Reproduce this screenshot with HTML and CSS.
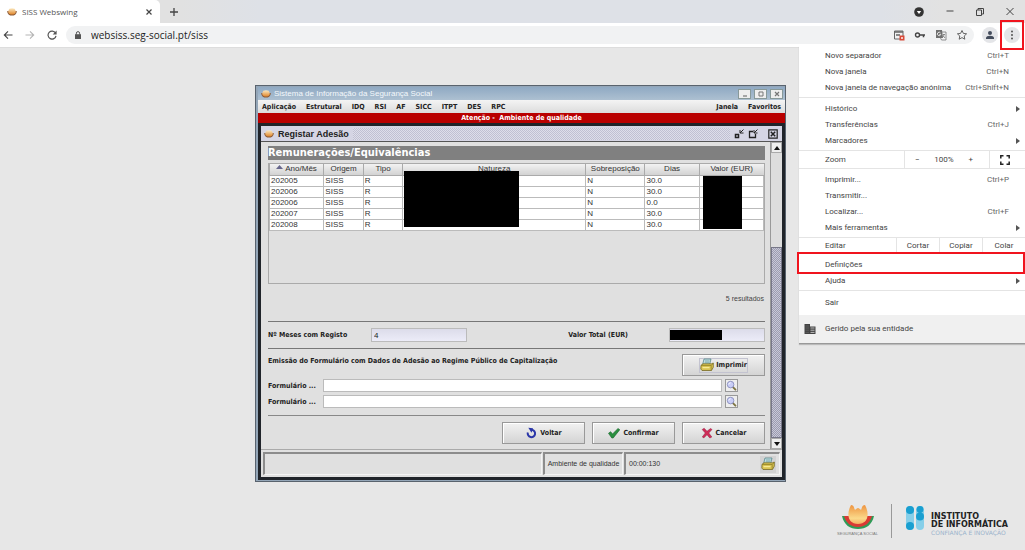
FILE: index.html
```html
<!DOCTYPE html>
<html lang="pt">
<head>
<meta charset="utf-8">
<title>SISS Webswing</title>
<link rel="stylesheet" href="styles.css">
</head>
<body>
<svg class="sprite" aria-hidden="true">
  <defs>
    <linearGradient id="gold" x1="0" y1="0" x2="0" y2="1"><stop offset="0" stop-color="#fbe9c0"/><stop offset="1" stop-color="#e0852a"/></linearGradient>
    <linearGradient id="flower" x1="0" y1="0" x2="0" y2="1"><stop offset="0" stop-color="#ee9440"/><stop offset=".7" stop-color="#fbd98a"/><stop offset="1" stop-color="#f3b062"/></linearGradient>
  </defs>
  <symbol id="i-bowl" viewBox="0 0 10 10">
    <path d="M0 4.200 2 4l1 2h4l1-2 2 .2C9.300 7.500 7.500 8.600 5 8.600S.7 7.500 0 4.200Z" fill="#8a5a38"/>
    <path d="M2.400 1.800 5 1.300l2.600.5C9.800 5 8.800 7.600 5 7.600S.2 5 2.400 1.800Z" fill="url(#gold)"/>
  </symbol>
  <symbol id="i-printer" viewBox="0 0 14 14">
    <path d="M4 1h7l-1.500 6h-7Z" fill="#c3e0e4" stroke="#477b80" stroke-width=".7"/>
    <path d="M5 3h4.500M4.700 4.800h4.500" stroke="#5f9195" stroke-width=".7"/>
    <path d="M1 7.300 3 5.800h8.500L13.300 5v4.200L11.500 12.500H2L.8 11Z" fill="#d8c352" stroke="#685b17" stroke-width=".7"/>
    <path d="M1.200 7.500h10l2-2M11.200 7.500v4.800" fill="none" stroke="#8b7b22" stroke-width=".7"/>
    <path d="M2.500 9.700h7" stroke="#fff3a6" stroke-width="1"/>
  </symbol>
  <symbol id="i-search" viewBox="0 0 12 12">
    <path d="m7.300 7.600 3 3" stroke="#7d7442" stroke-width="2" stroke-linecap="round"/>
    <circle cx="5" cy="5" r="3.600" fill="#c9cdf6" stroke="#8388b8" stroke-width=".9"/>
    <path d="M3 4.800A2 2 0 0 1 5 3" stroke="#fff" fill="none"/>
  </symbol>
  <symbol id="i-undo" viewBox="0 0 12 12"><path d="M2.800 5.500A3.700 3.700 0 1 0 7 2.800" fill="none" stroke="#2a36a8" stroke-width="2"/><path d="M3.300.8 8 1.200 6.500 5.800Z" fill="#2a36a8"/></symbol>
  <symbol id="i-check" viewBox="0 0 12 12"><path d="M.5 6.300 2.600 4.700l2 2.200L10 1.500l1.800 1.200L5.200 11H3.800Z" fill="#2a9040" stroke="#166228" stroke-width=".6"/></symbol>
  <symbol id="i-cross" viewBox="0 0 12 12"><path d="M1.200 2.500 3.200 1.300 6 4.300 9.500 1.500l1.500 1L7.800 6l3 4-2 1L6 7.700 2.800 10.900 1.300 9.900 4.300 6Z" fill="#cf2c58" stroke="#93183a" stroke-width=".5"/></symbol>
</svg>

<div class="browser">
  <header class="tabs">
    <div class="tab">
      <svg class="ic10"><use href="#i-bowl"/></svg>
      <span class="tab-name">SISS Webswing</span>
      <button class="plain" aria-label="Fechar separador"><svg class="ic8" viewBox="0 0 8 8"><path d="m1.500 1.500 5 5m0-5-5 5" stroke="#444" stroke-width="1.200"/></svg></button>
    </div>
    <button class="plain new-tab" aria-label="Novo separador"><svg class="ic10" viewBox="0 0 10 10"><path d="M5 1v8M1 5h8" stroke="#444" stroke-width="1.300"/></svg></button>
    <div class="controls">
      <button class="plain" aria-label="Pesquisar separadores"><svg class="ic12" viewBox="0 0 12 12"><circle cx="6" cy="6" r="4.800" fill="#333"/><path d="M3.800 5h4.400L6 8Z" fill="#fff"/></svg></button>
      <button class="plain" aria-label="Minimizar"><svg class="ic10" viewBox="0 0 10 10"><path d="M1.500 4h7" stroke="#444"/></svg></button>
      <button class="plain" aria-label="Restaurar"><svg class="ic10" viewBox="0 0 10 10"><path d="M1.500 3h5v5.500h-5ZM3 3V1.500h5.500v5.500h-2" fill="none" stroke="#444"/></svg></button>
      <button class="plain" aria-label="Fechar"><svg class="ic10" viewBox="0 0 10 10"><path d="m1.500 1 7 7m0-7-7 7" stroke="#444"/></svg></button>
    </div>
  </header>

  <nav class="toolbar">
    <button class="plain" aria-label="Retroceder"><svg class="ic10" viewBox="0 0 10 10"><path d="M9.500 5h-8M5 1.300 1.300 5 5 8.700" fill="none" stroke="#444" stroke-width="1.100"/></svg></button>
    <button class="plain" aria-label="Avançar"><svg class="ic10" viewBox="0 0 10 10"><path d="M.5 5h8M5 1.300 8.700 5 5 8.700" fill="none" stroke="#b5b5b5" stroke-width="1.100"/></svg></button>
    <button class="plain" aria-label="Atualizar"><svg class="ic10" viewBox="0 0 10 10"><path d="M8.500 3A4 4 0 1 0 9 5.800" fill="none" stroke="#555" stroke-width="1.200"/><path d="M9.600.5v4H5.700Z" fill="#555"/></svg></button>
    <div class="address">
      <svg class="ic8" viewBox="0 0 8 8"><path d="M1 3.200h6V8H1Z" fill="#555"/><path d="M2.400 3.500V2.200a1.600 1.600 0 0 1 3.200 0v1.300" fill="none" stroke="#555"/></svg>
      <input class="url" type="text" aria-label="Endereço" value="websiss.seg-social.pt/siss">
      <button class="plain" aria-label="Conteúdo bloqueado"><svg class="ic12" viewBox="0 0 12 12"><path d="M1.500 2h8.500v8h-8.500Z" fill="none" stroke="#666"/><path d="M1.500 3h8.500M3 6h4" stroke="#666" stroke-width="1.400"/><rect x="6.500" y="6.500" width="5" height="5" fill="#d84a38"/><path d="m8 8 2 2m0-2-2 2" stroke="#fff" stroke-width=".7"/></svg></button>
      <button class="plain" aria-label="Palavras-passe"><svg class="ic12" viewBox="0 0 12 12"><circle cx="3.500" cy="6" r="2" fill="none" stroke="#444" stroke-width="1.400"/><path d="M5.500 6H11M9.500 6v2.200" stroke="#444" stroke-width="1.500"/></svg></button>
      <button class="plain" aria-label="Traduzir"><svg class="ic12" viewBox="0 0 12 12"><path d="M1 1h6l1 8H1Z" fill="#707070"/><path d="M7 3h4v8H6.500L5.500 9M7.800 5.500H10M9 5c0 2-1 3-2 3.500M8 6.500l2 2.500" fill="none" stroke="#777" stroke-width=".8"/><path d="M5.500 4A1.700 1.700 0 1 0 5.700 5.500H4.300" fill="none" stroke="#fff" stroke-width=".8"/></svg></button>
      <button class="plain" aria-label="Adicionar aos marcadores"><svg class="ic12" viewBox="0 0 12 12"><path d="m6 1.500 1.400 2.900 3.200.4-2.400 2.200.6 3.200L6 8.600l-2.800 1.600.6-3.200L1.400 4.800l3.200-.4Z" fill="none" stroke="#555" stroke-width=".9"/></svg></button>
    </div>
    <button class="plain round" aria-label="Perfil"><svg class="ic10" viewBox="0 0 10 10"><circle cx="5" cy="3" r="2" fill="#444c5c"/><path d="M1 9V8c0-1.600 2-2.300 4-2.300S9 6.400 9 8v1Z" fill="#444c5c"/></svg></button>
    <button class="plain round more" aria-label="Mais opções" aria-expanded="true"><svg class="ic10" viewBox="0 0 10 10"><g fill="#444"><circle cx="5" cy="1.500" r=".9"/><circle cx="5" cy="5" r=".9"/><circle cx="5" cy="8.500" r=".9"/></g></svg></button>
  </nav>

  <aside class="menu">
    <div class="group first">
      <button class="item">Novo separador<kbd>Ctrl+T</kbd></button>
      <button class="item">Nova janela<kbd>Ctrl+N</kbd></button>
      <button class="item">Nova janela de navegação anónima<kbd>Ctrl+Shift+N</kbd></button>
    </div>
    <div class="group">
      <button class="item sub">Histórico</button>
      <button class="item">Transferências<kbd>Ctrl+J</kbd></button>
      <button class="item sub">Marcadores</button>
    </div>
    <div class="strip zoom">
      <span class="strip-name">Zoom</span>
      <div class="level"><button class="plain" aria-label="Diminuir">−</button><span>100%</span><button class="plain" aria-label="Aumentar">+</button></div>
      <button class="plain full" aria-label="Ecrã inteiro"><svg class="ic10" viewBox="0 0 10 10"><path d="M.8 3.500V.8h2.700M6.500.8h2.700v2.700M9.200 6.500v2.700H6.500M3.500 9.200H.8V6.500" fill="none" stroke="#222" stroke-width="1.500"/></svg></button>
    </div>
    <div class="group">
      <button class="item">Imprimir...<kbd>Ctrl+P</kbd></button>
      <button class="item">Transmitir...</button>
      <button class="item">Localizar...<kbd>Ctrl+F</kbd></button>
      <button class="item sub">Mais ferramentas</button>
    </div>
    <div class="strip edit">
      <span class="strip-name">Editar</span>
      <button class="plain">Cortar</button><button class="plain">Copiar</button><button class="plain">Colar</button>
    </div>
    <div class="group settings">
      <button class="item marked">Definições</button>
      <button class="item sub">Ajuda</button>
    </div>
    <div class="group last">
      <button class="item">Sair</button>
    </div>
    <div class="managed">
      <svg class="ic12" viewBox="0 0 12 12"><path d="M.5 1h5.500v2.500h5.500V11H.5Z" fill="#444"/><path d="M6.500 5h4M6.500 7.200h4M6.500 9.400h4" stroke="#ddd" stroke-width=".8"/><path d="M1.500 3h3.500M1.500 5h3.500M1.500 7.200h3.500M1.500 9.400h3.500" stroke="#777" stroke-width=".5"/></svg>
      <span>Gerido pela sua entidade</span>
    </div>
  </aside>

  <main class="page">
    <section class="win">
      <div class="win-title">
        <svg class="ic10"><use href="#i-bowl"/></svg><h1>Sistema de Informação da Segurança Social</h1>
        <button class="wbtn" aria-label="Minimizar"><svg class="ic8" viewBox="0 0 8 8"><path d="M2 6h4" stroke="#777" stroke-width="1.200"/></svg></button>
        <button class="wbtn" aria-label="Maximizar"><svg class="ic8" viewBox="0 0 8 8"><path d="M2 2h4v4H2Z" fill="none" stroke="#777"/></svg></button>
        <button class="wbtn" aria-label="Fechar"><svg class="ic8" viewBox="0 0 8 8"><path d="m2 2 4 4m0-4-4 4" stroke="#777" stroke-width="1.200"/></svg></button>
      </div>
      <nav class="win-menu">
        <a href="#">Aplicação</a><a href="#">Estrutural</a><a href="#">IDQ</a><a href="#">RSI</a><a href="#">AF</a><a href="#">SICC</a><a href="#">ITPT</a><a href="#">DES</a><a href="#">RPC</a>
        <a class="push" href="#">Janela</a><a href="#">Favoritos</a>
      </nav>
      <p class="alert">Atenção -&nbsp; Ambiente de qualidade</p>
      <div class="inner">
        <div class="inner-title">
          <svg class="ic10"><use href="#i-bowl"/></svg><h2>Registar Adesão</h2><span class="grip"></span>
          <button class="plain" aria-label="Minimizar"><svg class="ic10" viewBox="0 0 10 10"><path d="M1.500 5.500h3v3h-3Z" fill="none" stroke="#222" stroke-width="1.500"/><path d="M9.500.5 6 4M6 1v3h3.500" fill="none" stroke="#222"/></svg></button>
          <button class="plain" aria-label="Maximizar"><svg class="ic10" viewBox="0 0 10 10"><path d="M5 2.500H1.500v6h6V5" fill="none" stroke="#222" stroke-width="1.300"/><path d="M9.500.5 6 4M6 1v3h3.500" fill="none" stroke="#222"/></svg></button>
          <button class="plain close" aria-label="Fechar"><svg class="ic10" viewBox="0 0 10 10"><path d="M.8.8h8.400v8.400H.8Z" fill="none" stroke="#222" stroke-width="1.200"/><path d="m2.800 2.800 4.400 4.400m0-4.400L2.800 7.200" stroke="#222" stroke-width="1.500"/></svg></button>
        </div>
        <div class="body">
          <div class="form">
            <h3 class="band">Remunerações/Equivalências</h3>
            <div class="grid">
              <table>
                <colgroup><col class="c-ano"><col class="c-ori"><col class="c-tipo"><col><col class="c-sob"><col class="c-dias"><col class="c-val"></colgroup>
                <thead><tr><th><svg class="sort" viewBox="0 0 7 4"><path d="M0 4 3.500 0 7 4Z" fill="#66668c"/></svg> Ano/Mês</th><th>Origem</th><th>Tipo</th><th>Natureza</th><th>Sobreposição</th><th>Dias</th><th>Valor (EUR)</th></tr></thead>
                <tbody>
                  <tr><td>202005</td><td>SISS</td><td>R</td><td></td><td>N</td><td>30.0</td><td></td></tr>
                  <tr><td>202006</td><td>SISS</td><td>R</td><td></td><td>N</td><td>30.0</td><td></td></tr>
                  <tr><td>202006</td><td>SISS</td><td>R</td><td></td><td>N</td><td>0.0</td><td></td></tr>
                  <tr><td>202007</td><td>SISS</td><td>R</td><td></td><td>N</td><td>30.0</td><td></td></tr>
                  <tr><td>202008</td><td>SISS</td><td>R</td><td></td><td>N</td><td>30.0</td><td></td></tr>
                </tbody>
              </table>
              <span class="mask mask-nat"></span><span class="mask mask-val"></span>
            </div>
            <p class="count">5 resultados</p>
            <div class="totals">
              <label for="meses">Nº Meses com Registo</label><input id="meses" class="ro" type="text" value="4" readonly>
              <label class="push" for="total">Valor Total (EUR)</label><span class="covered"><input id="total" class="ro" type="text" readonly><span class="mask mask-total"></span></span>
            </div>
            <div class="issue">
              <p>Emissão do Formulário com Dados de Adesão ao Regime Público de Capitalização</p>
              <button class="btn"><span class="focus"><svg class="ic14"><use href="#i-printer"/></svg>Imprimir</span></button>
            </div>
            <div class="pick"><label for="f1">Formulário ...</label><input id="f1" type="text"><button aria-label="Procurar"><svg class="ic12"><use href="#i-search"/></svg></button></div>
            <div class="pick"><label for="f2">Formulário ...</label><input id="f2" type="text"><button aria-label="Procurar"><svg class="ic12"><use href="#i-search"/></svg></button></div>
            <div class="actions">
              <button class="btn"><svg class="ic12"><use href="#i-undo"/></svg>Voltar</button>
              <button class="btn"><svg class="ic12"><use href="#i-check"/></svg>Confirmar</button>
              <button class="btn"><svg class="ic12"><use href="#i-cross"/></svg>Cancelar</button>
            </div>
          </div>
          <div class="scroll">
            <button aria-label="Subir"><svg class="tri" viewBox="0 0 6 4"><path d="M0 4 3 0l3 4Z" fill="#111"/></svg></button>
            <div class="track"></div><div class="thumb"></div>
            <button aria-label="Descer"><svg class="tri" viewBox="0 0 6 4"><path d="M0 0h6L3 4Z" fill="#111"/></svg></button>
          </div>
        </div>
        <footer class="status">
          <div class="cell wide"></div><div class="cell env">Ambiente de qualidade</div>
          <div class="cell time"><span>00:00:130</span><button class="plain print" aria-label="Imprimir"><svg class="ic14"><use href="#i-printer"/></svg></button></div>
        </footer>
      </div>
    </section>
    <footer class="logos">
      <div class="ss">
        <svg class="ss-mark" viewBox="0 0 34 26">
          <path d="M1 12h5c1 6 5 9 11 9s10-3 11-9h5c-2 9-8 13-16 13S3 21 1 12Z" fill="#2f9b57"/>
          <path d="M3 12h5c1 5 4 7 9 7s8-2 9-7h5c-2 7-7 11-14 11S5 19 3 12Z" fill="#d93a34"/>
          <path d="M10 1c3 0 3 3 4 5 1-1 2-2 3-2s2 1 3 2c1-2 1-5 4-5 5 9 3 19-7 19S5 10 10 1Z" fill="url(#flower)"/>
        </svg>
        <span class="ss-name">SEGURANÇA SOCIAL</span>
      </div>
      <div class="ii">
        <svg class="ii-mark" viewBox="0 0 20 26">
          <g fill="#86cfe9"><rect x="1" y="1" width="8" height="24" rx="4"/><rect x="11" y="1" width="8" height="24" rx="4"/></g>
          <g fill="#1a9fd0"><circle cx="5" cy="5" r="4"/><circle cx="15" cy="4.500" r="3.400"/><circle cx="15" cy="11.500" r="4"/><circle cx="5" cy="21" r="4"/></g>
        </svg>
        <div class="ii-name"><b>INSTITUTO</b><b>DE INFORMÁTICA</b><small>CONFIANÇA E INOVAÇÃO</small></div>
      </div>
    </footer>
  </main>
</div>
</body>
</html>
```

FILE: styles.css
```css
* { box-sizing: border-box; }
body { margin: 0; background: #e7e7e7; color: #222; font: 8px/10px "Open Sans", "Noto Sans", sans-serif; }
h1, h2, h3, p { margin: 0; font-size: inherit; }
button, input { font: inherit; color: inherit; margin: 0; padding: 0; border-radius: 0; }
svg { display: block; flex: none; }
.sprite { position: absolute; width: 0; height: 0; }
.ic8 { width: 8px; height: 8px; }
.ic10 { width: 10px; height: 10px; }
.ic12 { width: 12px; height: 12px; }
.ic14 { width: 14px; height: 14px; }
.plain { display: flex; align-items: center; justify-content: center; border: 0; background: none; }
.browser { position: relative; display: flex; flex-direction: column; min-height: 100vh; }

/* tab strip */
.tabs { display: flex; align-items: center; height: 23px; background: linear-gradient(90deg, #e1e1e1 0 180px, #dee1e7 260px 86%, #e2e2e2 92%); }
.tab { display: flex; align-items: center; gap: 5px; width: 160px; height: 23px; padding: 0 7px; background: #fff; border-radius: 0 5px 0 0; color: #555; }
.tab-name { flex: 1; }
.new-tab { margin-left: 9px; }
.controls { display: flex; align-items: center; gap: 20px; margin: 0 10px 0 auto; }

/* toolbar */
.toolbar { display: flex; align-items: center; height: 25px; padding: 0 5px 0 3px; background: #fff; border-bottom: 1px solid #ddd; gap: 12px; }
.address { display: flex; flex: 1; align-items: center; gap: 9px; height: 18px; padding: 0 6px; border-radius: 9px; background: #f1f2f3; margin: 0 -4px 0 -3px; }
.address .ic8 { margin: 0 0 0 2px; }
.url { flex: 1; border: 0; background: none; font-size: 10px; color: #222; outline: 0; }
.round { width: 16px; height: 16px; border-radius: 50%; background: #e4e5e8; }
.more { position: relative; z-index: 3; margin-left: -6px; }
.more::after { content: ""; position: absolute; inset: -7px -4px; border: 2px solid #f0141e; }

/* drop-down menu */
.menu { position: absolute; z-index: 2; top: 46px; right: 0; width: 226px; background: #fff; color: #444; border-bottom: 1px solid #999; box-shadow: 0 1px 1px #bbb; font-family: Roboto, "Open Sans", sans-serif; }
.group { padding: 3px 0 1px; border-bottom: 1px solid #e4e4e4; }
.first { padding-top: 2px; }
.last { border: 0; padding: 4px 0; }
.item { position: relative; display: flex; align-items: center; justify-content: space-between; width: 100%; height: 16px; padding: 0 16px 0 26px; border: 0; background: none; white-space: nowrap; }
.item kbd { font: inherit; color: #666; }
.sub::after { content: ""; position: absolute; right: 5px; top: 5px; border: 3px solid transparent; border-left: 4px solid #555; border-right: 0; }
.marked::before { content: ""; position: absolute; inset: -5px 0 -1px -2px; border: 2px solid #f0141e; }
.strip { display: flex; align-items: stretch; height: 18px; border-bottom: 1px solid #e4e4e4; line-height: 18px; }
.strip-name { flex: 1; padding-left: 26px; }
.level { display: flex; align-items: center; justify-content: space-between; width: 86px; padding: 0 16px 0 10px; border: solid #e4e4e4; border-width: 0 1px; }
.full { width: 30px; margin-right: 5px; }
.edit { height: 15px; border: 0; line-height: 15px; }
.edit .plain { width: 43px; border-left: 1px solid #e4e4e4; }
.settings { padding-top: 4px; }
.managed { display: flex; align-items: center; gap: 9px; height: 28px; padding-left: 5px; background: #f0f0f0; }

/* application window */
.page { display: flex; flex: 1; flex-direction: column; justify-content: space-between; padding: 37px 17px 12px 255px; }
.win { margin-right: 222px; border: 1px solid #59636e; box-shadow: inset 0 0 0 2px #94a6b8; padding: 1px 0 1px 2px; font: 700 7px/10px "DejaVu Sans Condensed", "DejaVu Sans", sans-serif; }
.win-title { display: flex; align-items: center; gap: 3px; height: 13px; padding: 0 2px 0 3px; background: linear-gradient(#8fa9c3, #adc0d1); }
.win-title h1 { flex: 1; color: #f4f8fb; font: 400 8px/12px "Liberation Sans", sans-serif; }
.wbtn { display: flex; align-items: center; justify-content: center; width: 13px; height: 10px; border: 1px solid #899; background: #eee; }
.win-menu { display: flex; align-items: center; gap: 10px; height: 13px; padding: 0 4px; background: linear-gradient(#f4f4f4, #dcdcdc); }
.win-menu a { color: #222; text-decoration: none; }
.push { margin-left: auto; }
.alert { height: 10px; background: #b90000; color: #fff; text-align: center; }
.inner { border: 3px solid #20242a; background: #e0e0e0; }
.inner-title { display: flex; align-items: center; gap: 4px; height: 16px; padding: 0 4px 0 3px; background: #d5d5e4; border-bottom: 1px solid #555; }
.inner-title h2 { font: 700 9px/12px "Liberation Sans", sans-serif; }
.inner-title .close { margin-left: 6px; }
.grip { flex: 1; height: 12px; background: repeating-conic-gradient(#c0c0d2 0 25%, #dedeea 0 50%) 0 0 / 2px 2px; }
.body { display: flex; border-bottom: 1px solid #aaa; }
.form { flex: 1; padding: 4px 5px 5px 7px; }
.band { height: 14px; background: #808080; color: #fff; font-size: 11px; line-height: 14px; }
.grid { position: relative; height: 121px; margin-top: 3px; border: 1px solid #aaa; font: 400 8px/10px "Liberation Sans", sans-serif; color: #333; }
table { width: 100%; table-layout: fixed; border-collapse: collapse; }
th { height: 11px; padding: 0; font-weight: 400; border: solid #aaa; border-width: 0 0 1px 1px; background: linear-gradient(#f2f2f2, #d2d2d2); white-space: nowrap; }
td { height: 11px; padding: 0 1px; background: #fff; border: solid #bbb; border-width: 0 1px 1px; line-height: 10px; }
.c-ano { width: 11%; } .c-ori { width: 8%; } .c-tipo { width: 8%; } .c-sob { width: 12%; } .c-dias { width: 11%; } .c-val { width: 13%; }
.sort { display: inline-block; width: 7px; height: 4px; vertical-align: 2px; }
.mask { position: absolute; background: #000; }
.mask-nat { left: 135px; top: 7px; width: 115px; height: 56px; }
.mask-val { right: 22px; top: 12px; width: 39px; height: 53px; }
.count { margin: 10px 1px 17px; text-align: right; font: 400 7px/10px "Liberation Sans", sans-serif; color: #444; }
.totals { display: flex; align-items: center; height: 28px; border: solid #777; border-width: 1px 0; }
.totals label:first-child { width: 103px; }
.totals .push { margin-right: 41px; }
.ro { width: 96px; height: 14px; border: 1px solid #bbb; background: linear-gradient(#dcdcea, #ececf8); padding: 0 2px; font: 400 8px/10px "Liberation Sans", sans-serif; }
.covered { position: relative; display: flex; }
.mask-total { left: 1px; top: 2px; width: 52px; height: 10px; }
.issue { display: flex; justify-content: space-between; padding: 5px 0 3px; }
.issue p { padding-top: 2px; }
.btn { display: flex; align-items: center; justify-content: center; gap: 3px; width: 83px; height: 22px; border: 1px solid #999; background: linear-gradient(#f2f2f2, #d4d4d4); box-shadow: inset 1px 1px #fff; }
.focus { display: flex; align-items: center; gap: 2px; border: 1px solid #c3c3d0; height: 15px; }
.pick { display: flex; align-items: center; gap: 3px; margin-bottom: 3px; }
.pick label { width: 52px; }
.pick input { flex: 1; min-width: 0; height: 13px; border: 1px solid #bbb; background: #fff; }
.pick button { display: flex; width: 13px; height: 13px; border: 1px solid #999; background: #eee; margin-right: 27px; }
.pick .ic12 { width: 11px; height: 11px; }
.actions { display: flex; justify-content: flex-end; gap: 7px; margin-top: 7px; padding-top: 6px; border-top: 1px solid #888; }
.scroll { display: flex; flex-direction: column; width: 12px; border-left: 1px solid #999; background: #ddd; }
.scroll button { display: flex; align-items: center; justify-content: center; height: 11px; border: 1px solid #aaa; background: #eee; }
.tri { width: 6px; height: 4px; }
.track { flex: 94; }
.thumb { flex: 190; border: 1px solid #777788; background: repeating-conic-gradient(#9c9caf 0 25%, #c8c8d8 0 50%) 0 0 / 2px 2px; }
.status { display: flex; gap: 1px; padding: 2px; font: 400 7px/10px "Liberation Sans", sans-serif; color: #333; }
.cell { display: flex; align-items: center; height: 23px; border: solid; border-width: 2px 1px 1px 2px; border-color: #8c8c8c #f4f4f4 #f4f4f4 #8c8c8c; }
.wide { flex: 1; }
.env { width: 80px; justify-content: center; white-space: nowrap; }
.time { justify-content: space-between; width: 156px; padding: 0 3px; }
.print { width: 16px; height: 17px; background: #d2d2d2; }

/* logos */
.logos { display: flex; justify-content: flex-end; gap: 13px; }
.ss { display: flex; flex-direction: column; align-items: center; }
.ss-mark { width: 34px; height: 26px; }
.ss-name { font: 400 4px/8px "Liberation Sans", sans-serif; color: #777; }
.ii { display: flex; align-items: flex-start; gap: 6px; padding: 1px 0 0 13px; border-left: 1px solid #999; }
.ii-mark { width: 20px; height: 26px; }
.ii-name { display: flex; flex-direction: column; padding-top: 8px; font: 700 8px/8px "DejaVu Sans", sans-serif; color: #222; }
.ii-name small { font: 400 6px/8px "DejaVu Sans", sans-serif; color: #9bb3cc; }
```
